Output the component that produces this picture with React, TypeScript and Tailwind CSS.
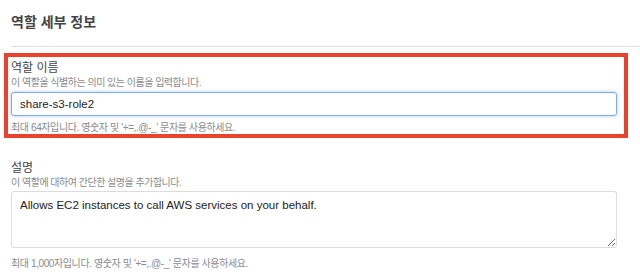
const RoleDetails = () => {
  return (
    <div className="w-[640px] h-[272px] bg-white overflow-hidden font-['Liberation_Sans','Noto_Sans_CJK_KR',sans-serif]">
      <h2 className="pl-[11px] pt-[13px] h-[46px] text-[14px] leading-[18px] font-bold text-[#444]">역할 세부 정보</h2>
      <div className="ml-[11px] border-t border-[#dddddd]" />

      {/* highlighted field */}
      <div className="mt-[6px] ml-[4px] w-[624px] border-[4px] border-[#e9432f] pl-[3px] pr-[7px] pt-[3px]">
        <label className="block text-[12px] leading-[16px] text-[#444]">역할 이름</label>
        <p className="text-[10px] leading-[14px] tracking-[-0.5px] text-[#8a8a8a]">이 역할을 식별하는 의미 있는 이름을 입력합니다.</p>
        <input
          readOnly
          value="share-s3-role2"
          className="mt-[2px] block w-full h-[24px] px-[8px] rounded-[3px] border border-[#7fa8e6] shadow-[0_0_3px_1px_rgba(120,160,230,0.35)] text-[11.5px] text-[#222] outline-none font-['Liberation_Sans',sans-serif]"
        />
        <p className="mt-[6px] text-[10px] leading-[12px] tracking-[-0.4px] text-[#8a8a8a]">최대 64자입니다. 영숫자 및 '+=,.@-_' 문자를 사용하세요.</p>
      </div>

      <div className="pl-[11px] pr-[23px] pt-[22px]">
        <label className="block text-[12px] leading-[16px] text-[#444]">설명</label>
        <p className="text-[10px] leading-[14px] tracking-[-0.5px] text-[#8a8a8a]">이 역할에 대하여 간단한 설명을 추가합니다.</p>
        <textarea
          readOnly
          value="Allows EC2 instances to call AWS services on your behalf."
          className="mt-[1px] block w-full h-[57px] px-[8px] py-[5px] rounded-[3px] border border-[#dcdcdc] text-[11.5px] leading-[16px] text-[#222] outline-none resize-y font-['Liberation_Sans',sans-serif]"
        />
        <p className="mt-[9px] text-[10px] leading-[14px] tracking-[-0.4px] text-[#8a8a8a]">최대 1,000자입니다. 영숫자 및 '+=,.@-_' 문자를 사용하세요.</p>
      </div>
    </div>
  );
};

export default function App() {
  return <RoleDetails />;
}
